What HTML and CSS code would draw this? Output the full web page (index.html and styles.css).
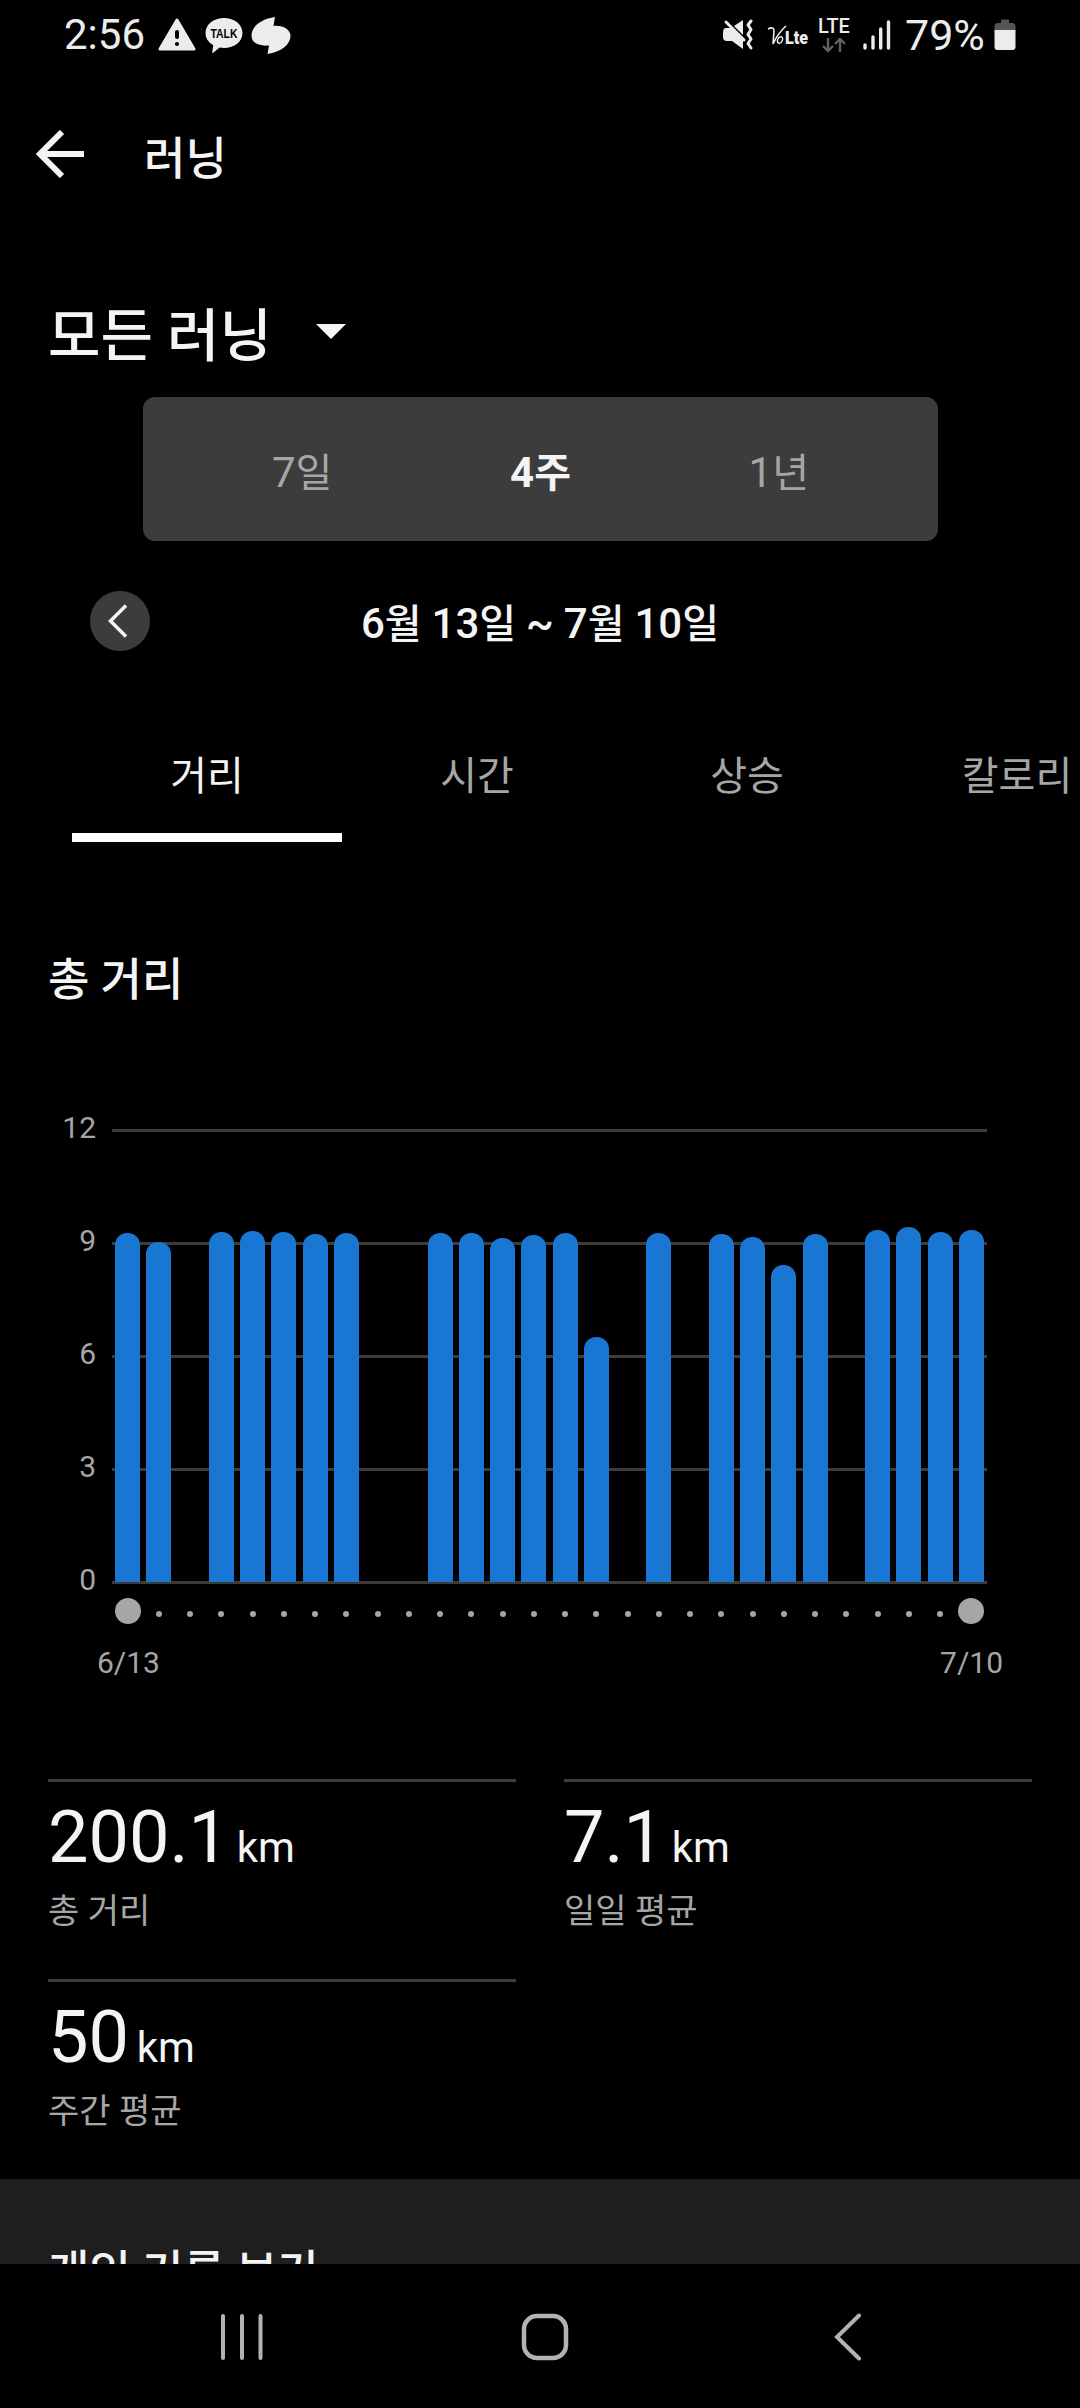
FILE: index.html
```html
<!DOCTYPE html>
<html lang="ko">
<head>
    <meta charset="UTF-8">
    <meta name="viewport" content="width=device-width, initial-scale=1.0">
    <title>러닝</title>
    <link rel="stylesheet" href="styles.css">
</head>
<body>

    <div class="status-bar">
        <span class="clock">2:56</span>
        <svg class="icon-warning" width="38" height="34" viewBox="0 0 38 34">
            <path d="M19 2 L36 31 H2 Z" fill="#ececec" stroke="#ececec" stroke-width="3" stroke-linejoin="round"/>
            <path d="M19 14 V19" stroke="#000" stroke-width="4" stroke-linecap="round"/>
            <circle cx="19" cy="26" r="2.1"/>
        </svg>
        <svg class="icon-talk" width="38" height="36" viewBox="0 0 38 36">
            <path d="M19 0 C29.500 0 37.500 6.600 37.500 15 S29.500 30 19 30 Q16.800 30 14.600 29.600 L8.500 34.600 Q7.300 35.400 7.300 34 L8.300 27.300 Q0.500 22.800 0.500 15 C0.500 6.600 8.500 0 19 0 Z" fill="#ececec"/>
            <text class="talk-text" x="19" y="20" text-anchor="middle" textLength="27" lengthAdjust="spacingAndGlyphs">TALK</text>
        </svg>
        <svg class="icon-swirl" width="40" height="38" viewBox="0 0 40 38">
            <path d="M24 0 L22.500 9 C31 8 39.500 12 39.500 19 C39.500 27.500 30 35 16.500 37 L18 28.500 C8 29.500 0.500 26 0.500 18.500 C0.500 9.500 10 2 24 0 Z" fill="#ececec"/>
        </svg>

        <div class="status-right">
            <svg class="icon-mute" width="32" height="32" viewBox="0 0 32 32">
                <path d="M2 9 H8 L20 21 V30 L9 22 H4 Q0 22 0 18 V13 Q0 10 2 9 Z M11 7 L20 1 V16 Z" fill="#ececec"/>
                <path d="M3 3 L21 21" stroke="#ececec" stroke-width="3" stroke-linecap="round"/>
                <path d="M28 2 L25 6 L28 10.500 L25 15.500 L28 20 L25 24.500 L28 29" fill="none" stroke="#ececec" stroke-width="3" stroke-linejoin="round" stroke-linecap="round"/>
            </svg>
            <svg class="icon-volte" width="44" height="26" viewBox="0 0 44 26">
                <path d="M1 4 Q7 1 7 6 L6 19 Q11 8 19 1" fill="none" stroke="#ececec" stroke-width="1.600"/>
                <ellipse cx="13" cy="15" rx="2.300" ry="3.400" transform="rotate(25 13 15)" fill="none" stroke="#ececec" stroke-width="1.400"/>
                <text class="volte-text" x="18" y="18.500" textLength="23" lengthAdjust="spacingAndGlyphs">Lte</text>
            </svg>
            <div class="lte">
                <span>LTE</span>
                <svg width="24" height="16" viewBox="0 0 24 16">
                    <path d="M6 1 V14 M1 9 L6 14 L11 9 M18 15 V2 M13 7 L18 2 L23 7" fill="none" stroke="#616161" stroke-width="2.400"/>
                </svg>
            </div>
            <svg class="icon-signal" width="28" height="30" viewBox="0 0 28 30">
                <path d="M2 25 V28 M10 17 V28 M17.700 9 V28 M25.500 2 V28" stroke="#ececec" stroke-width="3.400" stroke-linecap="round"/>
            </svg>
            <span class="battery-text">79%</span>
            <svg class="icon-battery" width="22" height="32" viewBox="0 0 22 32">
                <path d="M7 0.500 H15 V4 H18 Q21.500 4 21.500 8 V12 H0.500 V8 Q0.500 4 4 4 H7 Z" fill="#565656"/>
                <path d="M0.500 11 H21.500 V28 Q21.500 31 18.500 31 H3.500 Q0.500 31 0.500 28 Z" fill="#ececec"/>
            </svg>
        </div>
    </div>

    <header class="app-bar">
        <svg width="48" height="48" viewBox="0 0 48 48">
            <path d="M26 2 L4 24 L26 46 M4 24 H48" fill="none" stroke="#f4f4f4" stroke-width="6"/>
        </svg>
        <h1>러닝</h1>
    </header>

    <main>
        <div class="filter">
            <h2>모든 러닝</h2>
            <svg width="30" height="15" viewBox="0 0 30 15"><path d="M0 0 H30 L15 15 Z" fill="#f4f4f4"/></svg>
        </div>

        <div class="segments">
            <div class="segment"><span class="num">7</span>일</div>
            <div class="segment active"><span class="num">4</span>주</div>
            <div class="segment"><span class="num">1</span>년</div>
        </div>

        <div class="period">
            <button class="prev">
                <svg width="20" height="34" viewBox="0 0 20 34"><path d="M18 1.500 L2.500 17 L18 32.500" fill="none" stroke="#f4f4f4" stroke-width="3.500"/></svg>
            </button>
            <div class="dates"><span class="num">6</span>월 <span class="num">13</span>일 <span class="num">~</span> <span class="num">7</span>월 <span class="num">10</span>일</div>
        </div>

        <div class="tabs">
            <div class="tab active">거리</div>
            <div class="tab">시간</div>
            <div class="tab">상승</div>
            <div class="tab">칼로리</div>
        </div>

        <h3 class="section-title">총 거리</h3>

        <div class="chart">
            <div class="y-axis">
                <span>12</span>
                <span>9</span>
                <span>6</span>
                <span>3</span>
                <span>0</span>
            </div>
            <div class="plot">
                <div class="lines"><i></i><i></i><i></i><i></i><i></i></div>
                <div class="bars" id="bars"></div>
            </div>
            <div class="dots" id="dots"></div>
            <div class="x-axis"><span>6/13</span><span>7/10</span></div>
        </div>

        <div class="stats">
            <div class="stat">
                <div class="value">200.1 <small>km</small></div>
                <div class="label">총 거리</div>
            </div>
            <div class="stat">
                <div class="value">7.1 <small>km</small></div>
                <div class="label">일일 평균</div>
            </div>
            <div class="stat">
                <div class="value">50 <small>km</small></div>
                <div class="label">주간 평균</div>
            </div>
        </div>

        <div class="records">개인 기록 보기</div>
    </main>

    <nav class="nav-bar">
        <svg class="recents" width="44" height="48" viewBox="0 0 44 48">
            <path d="M3 3 V45 M22 3 V45 M40.500 3 V45" stroke="#b3b3b3" stroke-width="4" stroke-linecap="round"/>
        </svg>
        <svg class="home" width="48" height="48" viewBox="0 0 48 48">
            <rect x="3" y="3" width="42" height="42" rx="13" fill="none" stroke="#b3b3b3" stroke-width="4.500"/>
        </svg>
        <svg class="back" width="28" height="48" viewBox="0 0 28 48">
            <path d="M25 2.500 L3 24 L25 45.500" fill="none" stroke="#b3b3b3" stroke-width="4" stroke-linecap="round"/>
        </svg>
    </nav>

<script>
    // bar heights in px, 3 km = 113px, 0 = rest day
    const heights = [
        349, 340, 0, 350, 351, 350, 348, 349, 0, 0,
        349, 349, 344, 347, 349, 245, 0, 349, 0, 348,
        345, 317, 348, 0, 352, 355, 350, 352
    ];
    const bars = document.getElementById('bars');
    const dots = document.getElementById('dots');

    heights.forEach((h, i) => {
        const bar = document.createElement('div');
        bar.className = 'bar';
        bar.style.height = h + 'px';
        bars.appendChild(bar);

        const dot = document.createElement('div');
        dot.className = (i === 0 || i === heights.length - 1) ? 'dot big' : 'dot';
        dots.appendChild(dot);
    });
</script>

</body>
</html>
```
FILE: styles.css
```css
* {
    box-sizing: border-box;
}

body {
    font-family: Roboto, "Noto Sans CJK KR", sans-serif;
    background-color: #000;
    color: #f4f4f4;
    margin: 0;
    width: 1080px;
    height: 2408px;
    overflow: hidden;
    display: flex;
    flex-direction: column;
}

svg {
    display: block;
    flex-shrink: 0;
}

h1, h2, h3 {
    margin: 0;
    font-weight: 500;
}

/* latin digits run slightly larger than hangul */
.num {
    font-size: 42px;
}

/* --- status bar --- */
.status-bar {
    display: flex;
    align-items: flex-start;
    height: 70px;
    padding: 0 64px 0 64px;
    color: #ececec;
}

.clock, .battery-text {
    font-size: 42px;
    line-height: 48px;
    margin-top: 11px;
}

.clock {
    width: 94px;
}

.icon-warning {
    margin-top: 18px;
}

.icon-talk {
    margin: 18px 0 0 9px;
}

.talk-text {
    font: 700 13px "Liberation Sans", sans-serif;
    fill: #000;
}

.icon-swirl {
    margin: 17px 0 0 8px;
}

.status-right {
    display: flex;
    align-items: flex-start;
    margin-left: auto;
}

.icon-mute {
    margin-top: 19px;
}

.icon-volte {
    margin: 25px 0 0 12px;
}

.volte-text {
    font: 900 18px Roboto, sans-serif;
    fill: #ececec;
}

.lte {
    display: flex;
    flex-direction: column;
    align-items: center;
    width: 34px;
    margin: 16px 0 0 6px;
    font-size: 20px;
    font-weight: 500;
    line-height: 21px;
}

.icon-signal {
    margin: 20px 14px 0 12px;
}

.battery-text {
    width: 89px;
    font-size: 43px;
}

.icon-battery {
    margin-top: 19px;
}

/* --- header --- */
.app-bar {
    display: flex;
    align-items: center;
    height: 168px;
    padding-left: 36px;
    gap: 60px;
}

.app-bar h1 {
    padding-top: 11px;
    font-size: 45px;
    line-height: 60px;
}

main {
    height: 2026px;
    overflow: hidden;
}

.filter {
    display: flex;
    height: 159px;
    padding: 59px 0 0 48px;
}

.filter h2 {
    width: 268px;
    font-size: 57px;
    line-height: 80px;
}

.filter svg {
    margin-top: 27px;
}

.segments {
    display: flex;
    width: 795px;
    height: 144px;
    margin-left: 143px;
    padding: 4px 40px 0;
    background-color: #3c3c3c;
    border-radius: 12px;
}

.segment {
    flex: 1;
    text-align: center;
    font-size: 40px;
    line-height: 144px;
    color: #a6a6a6;
}

.segment.active {
    color: #f4f4f4;
    font-weight: 700;
}

.period {
    display: grid;
    grid-template-columns: 60px 1fr 60px;
    align-items: center;
    height: 60px;
    margin: 49px 90px 50px;
}

.prev {
    display: flex;
    align-items: center;
    width: 60px;
    height: 60px;
    padding: 0 0 0 18px;
    border: none;
    border-radius: 50%;
    background-color: #3c3c3c;
}

.dates {
    padding-top: 8px;
    text-align: center;
    font-size: 40px;
    font-weight: 500;
    line-height: 52px;
}

/* --- tabs --- */
.tabs {
    display: flex;
    padding-left: 72px;
    overflow: hidden;
}

.tab {
    flex: 0 0 270px;
    height: 142px;
    padding-top: 5px;
    text-align: center;
    font-size: 40px;
    line-height: 144px;
    color: #a6a6a6;
}

.tab.active {
    color: #f4f4f4;
    border-bottom: 9px solid #fff;
    line-height: 144px;
}

.section-title {
    margin: 99px 0 0 48px;
    font-size: 45px;
    line-height: 80px;
}

/* --- chart --- */
.chart {
    display: grid;
    grid-template-columns: 96px 875px;
    column-gap: 16px;
    margin-top: 108px;
    color: #a6a6a6;
    font-size: 30px;
}

.y-axis {
    display: flex;
    flex-direction: column;
    justify-content: space-between;
    height: 488px;
    margin-top: -19px;
    margin-bottom: -1px;
    text-align: right;
    line-height: 36px;
}

.plot {
    display: grid;
    height: 455px;
}

.lines, .bars {
    grid-area: 1 / 1;
}

.lines {
    display: flex;
    flex-direction: column;
    justify-content: space-between;
}

.lines i {
    height: 3px;
    background-color: #3c3c3c;
}

.bars {
    display: flex;
    justify-content: space-between;
    align-items: flex-end;
    padding: 0 3px 2px;
}

.bar {
    width: 25px;
    background-color: #1976d2;
    border-radius: 12px 12px 0 0;
}

.dots {
    grid-column: 2;
    display: flex;
    justify-content: space-between;
    padding: 0 3px;
    margin-top: 1px;
}

.dot {
    display: flex;
    justify-content: center;
    width: 25px;
    height: 26px;
    padding-top: 13px;
}

.dot::before {
    content: "";
    width: 6px;
    height: 6px;
    border-radius: 50%;
    background-color: #a6a6a6;
}

.dot.big {
    padding: 0;
}

.dot.big::before {
    flex: 0 0 26px;
    height: 26px;
}

.x-axis {
    grid-column: 2;
    display: flex;
    justify-content: space-between;
    margin: 21px -16px 0 -15px;
    line-height: 36px;
}

/* --- totals --- */
.stats {
    display: grid;
    grid-template-columns: 468px 468px;
    column-gap: 48px;
    grid-auto-rows: 200px;
    margin: 98px 48px 0;
}

.stat {
    border-top: 3px solid #3c3c3c;
}

.value {
    margin-top: 14px;
    font-size: 72px;
    line-height: 84px;
    word-spacing: -10px;
}

.value small {
    font-size: 42px;
}

.label {
    margin-top: -4px;
    font-size: 34px;
    line-height: 50px;
    color: #a6a6a6;
}

.records {
    height: 200px;
    padding: 61px 0 0 48px;
    background-color: #1e1e1e;
    font-size: 45px;
    font-weight: 500;
    line-height: 66px;
}

/* --- system navigation --- */
.nav-bar {
    display: flex;
    align-items: center;
    justify-content: space-between;
    height: 144px;
    padding: 2px 218px 0 220px;
}

.home {
    margin-left: -8px;
}
```
